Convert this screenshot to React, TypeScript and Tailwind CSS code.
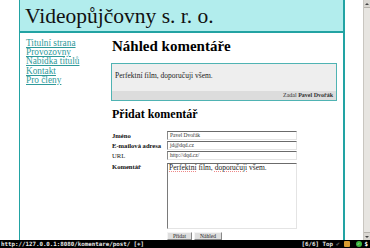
import React from "react";

const serif = { fontFamily: '"Liberation Serif", "Times New Roman", serif' };

function Input({ value }: { value: string }) {
  return (
    <div className="h-[9px] w-[130px] bg-white border-t-[1.5px] border-l border-b border-r border-t-[#6b6b6b] border-l-[#8a8a8a] border-b-[#e4e4e4] border-r-[#e4e4e4] text-[5.5px] leading-[7px] pl-[2px] text-[#333] overflow-hidden whitespace-nowrap">
      {value}
    </div>
  );
}

export default function App() {
  return (
    <div className="w-[370px] h-[248px] overflow-hidden flex flex-col bg-white" style={serif}>
      <div className="flex h-[240px]">
        <div className="w-[363px] h-full pl-[19px]">
          <div className="w-[326px] h-full border-l border-r-2 border-[#22a3a3] flex flex-col">
            <div className="h-[35px] bg-[#b2eded] border-b-2 border-[#22a3a3] pl-[5px] pt-[4px]">
              <div className="text-[21.5px] leading-[25px] text-[#111]">Videopůjčovny s. r. o.</div>
            </div>
            <div className="flex flex-1">
              <div className="w-[91px] pl-[6px] pt-[6px] flex flex-col text-[9.3px] leading-[9.2px]">
                {["Titulní strana", "Provozovny", "Nabídka titulů", "Kontakt", "Pro členy"].map((t) => (
                  <a key={t} href="#" className="text-[#2f9a9a] underline underline-offset-[1px]">
                    {t}
                  </a>
                ))}
              </div>
              <div className="flex-1 pr-[6px]">
                <div className="pl-[1px] pt-[4px] text-[15px] leading-[18px] font-bold text-black">Náhled komentáře</div>
                <div className="mt-[8px] border-[1.5px] border-[#4fb3b3] bg-[#eeeeee] h-[38px] flex flex-col">
                  <div className="flex-1 pl-[3px] pt-[7px] text-[7.5px] leading-[9px] text-[#222]">
                    Perfektní film, doporučuji všem.
                  </div>
                  <div className="h-[9px] bg-[#dcdcdc] text-right pr-[3px] text-[6px] leading-[9px] text-[#333]">
                    Zadal <span className="font-bold">Pavel Dvořák</span>
                  </div>
                </div>
                <div className="pl-[1px] mt-[6px] text-[12px] leading-[14px] font-bold text-black">Přidat komentář</div>
                <div className="mt-[10px] flex flex-col gap-[1px]">
                  <div className="flex h-[9px]">
                    <div className="w-[56px] pl-[1px] text-[6.6px] leading-[9px] font-bold text-[#111]">Jméno</div>
                    <Input value="Pavel Dvořák" />
                  </div>
                  <div className="flex h-[9px]">
                    <div className="w-[56px] pl-[1px] text-[6.6px] leading-[9px] font-bold text-[#111] whitespace-nowrap">E-mailová adresa</div>
                    <Input value="jd@dqd.cz" />
                  </div>
                  <div className="flex h-[9px]">
                    <div className="w-[56px] pl-[1px] text-[6.6px] leading-[9px] text-[#111]">URL</div>
                    <Input value="http://dqd.cz/" />
                  </div>
                  <div className="flex mt-[2px]">
                    <div className="w-[56px] pl-[1px] text-[6.6px] leading-[8px] font-bold text-[#111]">Komentář</div>
                    <div className="h-[66px] w-[130px] bg-white border-t-[1.5px] border-l-[1.5px] border-b border-r border-t-[#6b6b6b] border-l-[#7a7a7a] border-b-[#e4e4e4] border-r-[#e4e4e4] text-[7.5px] leading-[8px] pl-[1px] text-[#222] whitespace-nowrap">
                      <span className="underline decoration-[#e88] decoration-dotted">Perfektní</span> film,{" "}
                      <span className="underline decoration-[#e88] decoration-dotted">doporučuji</span> všem.
                    </div>
                  </div>
                  <div className="flex mt-[2px] pl-[56px] gap-[2px]">
                    <button className="h-[8px] w-[25px] bg-[#dedede] border border-t-[#f4f4f4] border-l-[#f4f4f4] border-b-[#888] border-r-[#888] text-[5.5px] leading-[6px] text-[#222]">
                      Přidat
                    </button>
                    <button className="h-[8px] w-[28px] bg-[#dedede] border border-t-[#f4f4f4] border-l-[#f4f4f4] border-b-[#888] border-r-[#888] text-[5.5px] leading-[6px] text-[#222]">
                      Náhled
                    </button>
                  </div>
                </div>
              </div>
            </div>
          </div>
        </div>
        <div className="w-[7px] h-full bg-[#e7e5e1] border-l border-[#c9c6c0] flex flex-col justify-between">
          <div className="h-[8px] bg-[#dad7d2] border-b border-[#b5b2ac] flex items-center justify-center">
            <div className="w-0 h-0 border-l-[2px] border-r-[2px] border-b-[2px] border-l-transparent border-r-transparent border-b-[#444]" />
          </div>
          <div className="h-[8px] bg-[#dad7d2] border-t border-[#b5b2ac] flex items-center justify-center">
            <div className="w-0 h-0 border-l-[2px] border-r-[2px] border-t-[2px] border-l-transparent border-r-transparent border-t-[#444]" />
          </div>
        </div>
      </div>
      <div
        className="h-[8px] bg-black text-[#e8e8e8] text-[5.8px] leading-[8px] font-bold flex items-center pl-[1px] whitespace-nowrap"
        style={{ fontFamily: '"DejaVu Sans Mono", "Liberation Mono", monospace' }}
      >
        <span>http://127.0.0.1:8080/komentare/post/ [+]</span>
        <span className="ml-auto">[6/6] Top</span>
        <span className="ml-[3px] text-[#aaa]">✐</span>
        <span className="ml-[4px] w-[6px] h-[6px] rounded-[1px] bg-[#d89a30]" />
        <span className="ml-[6px] w-[6px] h-[6px] rounded-full bg-[#3cb43c] flex items-center justify-center text-white text-[4px] leading-[4px]">✓</span>
        <span className="ml-[3px] mr-[2px] text-white">$</span>
      </div>
    </div>
  );
}
